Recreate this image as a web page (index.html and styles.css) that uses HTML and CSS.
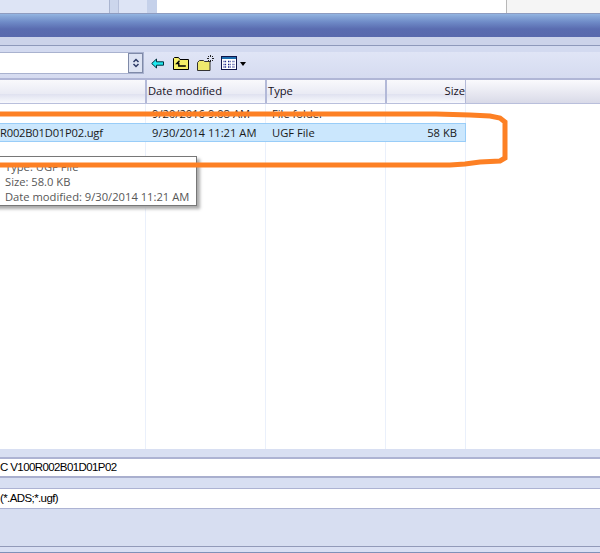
FILE: index.html
```html
<!DOCTYPE html>
<html lang="en">
<head>
<meta charset="utf-8">
<title>Open file dialog</title>
<link rel="stylesheet" href="styles.css">
</head>
<body>
<div class="dialog">
  <div class="backdrop">
    <div class="bd-left"><span class="bd-btn"></span><span class="bd-btn2"></span></div>
    <div class="bd-white"></div>
    <div class="bd-right"></div>
  </div>
  <div class="titlebar"></div>
  <div class="menustrip"></div>
  <div class="dither"></div>
  <div class="toolbar">
    <div class="combo">
      <span class="combo-btn"><svg width="10" height="12" viewBox="0 0 10 12"><path d="M2.500 5 5 2.500 7.500 5M2.500 7 5 9.500 7.500 7" fill="none" stroke="#2c3a66" stroke-width="1.500"/></svg></span>
    </div>
    <div class="tools">
      <svg class="t-back" width="13" height="11" viewBox="0 0 13 11"><path d="M.7 5.500 5.500 1v2.800h7v3.400h-7V10z" fill="#1feaf0" stroke="#00303c"/></svg>
      <svg class="t-up" width="16" height="13" viewBox="0 0 16 13"><path d="M.5 12.500V1.500L1.500.5h4l1.500 2h8.500v10z" fill="#f5ef68" stroke="#000"/><path d="M6.500 3.800 3.800 6.500h2v2.500h7" fill="none" stroke="#000" stroke-width="1.400"/></svg>
      <svg class="t-new" width="17" height="16" viewBox="0 0 17 16"><path d="M.5 15.500V7.500l2-2h4l1 1h5.500v9z" fill="#efe96e" stroke="#333"/><path fill="#222" d="M13 0h1v2h-1zM13 5h1v2h-1zM10 3h2v1h-2zM15 3h2v1h-2zM11 1h1v1h-1zM15 1h1v1h-1zM11 5h1v1h-1zM15 5h1v1h-1z"/></svg>
      <svg class="t-view" width="16" height="14" viewBox="0 0 16 14"><rect x=".5" y=".5" width="15" height="13" fill="#fff" stroke="#10154a"/><rect x="1" y="1" width="14" height="2" fill="#1c6fb0"/><path d="M2.500 5.500h3M7 5.500h3M11.500 5.500h2M2.500 8.500h3M7 8.500h3M11.500 8.500h2M2.500 11h3M7 11h3M11.500 11h2" stroke="#14208a" stroke-width="1.500" stroke-dasharray="1 .6"/></svg>
      <span class="t-caret"></span>
    </div>
  </div>
  <div class="header">
    <div class="col col-name"></div>
    <div class="col col-date">Date modified</div>
    <div class="col col-type">Type</div>
    <div class="col col-size">Size</div>
    <div class="col col-fill"></div>
  </div>
  <div class="list">
    <div class="guides"><i class="g-name"></i><i class="g-date"></i><i class="g-type"></i><i class="g-size"></i></div>
    <div class="row">
      <span class="c-name"></span><span class="c-date">9/20/2016 9:08 AM</span><span class="c-type">File folder</span><span class="c-size"></span>
    </div>
    <div class="row row-sel">
      <span class="c-name"><span class="c-name-text">R002B01D01P02.ugf</span></span><span class="c-date">9/30/2014 11:21 AM</span><span class="c-type">UGF File</span><span class="c-size">58 KB</span>
    </div>
    <div class="tooltip">
      <div>Type: UGF File</div>
      <div>Size: 58.0 KB</div>
      <div>Date modified: 9/30/2014 11:21 AM</div>
    </div>
    <svg class="marker" width="600" height="345" viewBox="0 0 600 345"><path d="M-10 10H436L470 11 490 12 500 14 505 18V54L500 57 480 58 465 60 450 61H-10" fill="none" stroke="#fd8024" stroke-width="5"/></svg>
  </div>
  <div class="field-gap top"></div>
  <div class="field"><span class="field-text">C V100R002B01D01P02</span></div>
  <div class="field-gap mid"></div>
  <div class="field second"><span class="field-text">(*.ADS;*.ugf)</span></div>
  <div class="footer"></div>
  <div class="bottom"></div>
</div>
</body>
</html>
```
FILE: styles.css
```css
* { box-sizing: border-box; }
html, body { margin: 0; padding: 0; }
body { width: 600px; height: 553px; overflow: hidden; background: #d8dff2; font-family: "Open Sans", "Liberation Sans", sans-serif; }
.dialog { position: relative; width: 600px; height: 553px; display: flex; flex-direction: column; overflow: hidden; }

.backdrop { height: 14px; display: flex; flex: none; border-bottom: 1px solid #8e9cc0; }
.bd-left { width: 157px; background: #dde4f5; display: flex; padding-left: 109px; }
.bd-btn { width: 10px; background: #ccd6ec; border-left: 1px solid #aab5d0; border-right: 1px solid #b6c0da; }
.bd-btn2 { margin-left: 28px; width: 10px; background: #c5d1ea; }
.bd-white { width: 350px; background: #fff; border-right: 1px solid #b8b8b8; }
.bd-right { flex: 1; background: #f5f5f5; }

.titlebar { height: 23px; flex: none; background: linear-gradient(#93b5e2 0, #8aa9d9 2px, #6f8bc7 8px, #5a6cb0 15px, #5969ad 23px); }
.menustrip { height: 9px; flex: none; background: #ccd3ea; border-bottom: 1px solid #8e99bb; }
.dither { height: 6px; flex: none; background: #d3daf0; }
.toolbar { height: 28px; flex: none; display: flex; align-items: flex-start; background: linear-gradient(#e0e5f6, #d5dbf0); border-bottom: 2px solid #b0b6d6; }
.combo { width: 144px; height: 22px; background: #fff; border: 1px solid #a9b2cf; border-left: 0; display: flex; justify-content: flex-end; }
.combo-btn { width: 15px; height: 20px; background: #dde3f3; border: 1px solid #7f8aa8; display: flex; align-items: center; justify-content: center; }
.tools { display: flex; align-items: flex-start; margin-left: 7px; padding-top: 3px; }
.t-back { margin-top: 3px; }
.t-up { margin-left: 9px; margin-top: 2px; }
.t-new { margin-left: 8px; }
.t-view { margin-left: 7px; margin-top: 1px; }
.t-caret { margin: 7px 0 0 3px; width: 0; height: 0; border: 3px solid transparent; border-top: 4px solid #000; }

.header { height: 24px; flex: none; display: flex; font-size: 11.200px; color: #16101e; background: linear-gradient(#f9f9fc 0, #e9eaf4 62%, #e0e2f0 62%, #f8f9fd 100%); border-bottom: 1px solid #b9bfdc; }
.col { height: 100%; line-height: 22px; padding-left: 1px; border-right: 2px solid #b3b9d8; }
.col-name { width: 147px; }
.col-date { width: 120px; }
.col-type { width: 120px; }
.col-size { width: 79px; padding-right: 0; text-align: right; border-right: 1px solid #b3b9d8; }
.col-fill { flex: 1; border: 0; background: linear-gradient(#fafafd, #d9dae8); }

.list { height: 345px; flex: none; position: relative; background: #fff; font-size: 11.200px; color: #1a1a1a; }
.guides { position: absolute; inset: 0; display: flex; pointer-events: none; }
.guides i { display: block; height: 100%; border-right: 1px solid #eaf0fb; }
.g-name { width: 146px; }
.g-date { width: 120px; }
.g-type { width: 120px; }
.g-size { width: 80px; }
.row { position: relative; height: 19px; display: flex; line-height: 19px; width: 466px; }
.row-sel { background: #cbe7fd; border: solid #99cdf8; border-width: 1px 1px 1px 0; line-height: 18px; }
.c-name { width: 152px; flex: none; }
.c-name-text { letter-spacing: -.2px; }
.c-date { width: 120px; flex: none; }
.c-type { width: 100px; flex: none; }
.c-size { width: 85px; flex: none; text-align: right; }

.tooltip { position: absolute; left: -11px; top: 52px; width: 208px; height: 50px; padding: 2px 0 0 15px; background: #fff; border: 1px solid #777; font-size: 11.200px; line-height: 15px; color: #575757; box-shadow: 3px 3px 3px #aaa; }
.marker { position: absolute; left: 0; top: 0; }

.field-gap { flex: none; background: #d8dff2; }
.field-gap.top { height: 10px; border-bottom: 2px solid #adb3d3; }
.field-gap.mid { height: 13px; border-top: 2px solid #a9afce; border-bottom: 1px solid #adb3d3; }
.field { height: 17px; flex: none; background: #fff; font-size: 11.500px; line-height: 17px; color: #000; font-family: "Liberation Sans", Arial, sans-serif; }
.field-text { letter-spacing: -.6px; }
.field.second { height: 19px; line-height: 19px; }
.footer { height: 39px; flex: none; background: #d7def1; border-top: 1px solid #adb3d3; border-bottom: 1px solid #929ab9; }
.bottom { flex: 1; background: #d9dff3; border-bottom: 1px solid #7f91b8; }
```
